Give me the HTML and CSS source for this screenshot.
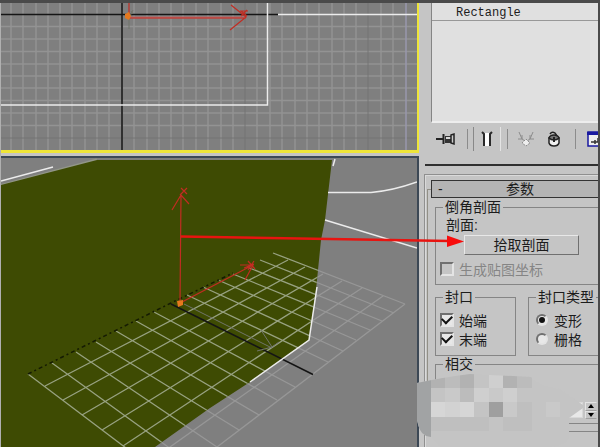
FILE: index.html
```html
<!DOCTYPE html>
<html lang="zh-CN">
<head>
<meta charset="utf-8">
<title>倒角剖面</title>
<link rel="stylesheet" href="styles.css">
</head>
<body>
<div class="app">
  <main class="viewports">
    <section class="viewport viewport-top">
      <svg viewBox="1 3 416 147" preserveAspectRatio="xMinYMin slice">
        <path class="grid-line" d="M11 3V150M23 3V150M36 3V150M48 3V150M60 3V150M72 3V150M85 3V150M97 3V150M109 3V150M134 3V150M147 3V150M159 3V150M171 3V150M183 3V150M196 3V150M208 3V150M221 3V150M233 3V150M257 3V150M270 3V150M282 3V150M295 3V150M307 3V150M319 3V150M332 3V150M344 3V150M356 3V150M381 3V150M393 3V150M1 26.500H417M1 39H417M1 51.500H417M1 64H417M1 76H417M1 88H417M1 100.500H417M1 113H417M1 125.500H417"/>
        <path class="grid-dark" d="M245 3V150M368 3V150M1 138H417"/>
        <path class="axis-purple" d="M406 3V150"/>
        <path class="axis-black thick" d="M122 3V150"/>
        <path class="axis-black" d="M1 14.500H278"/>
        <path class="spline" d="M278 14.500H417M267.500 3V105H1"/>
        <path class="gizmo-pale" d="M130 17.500H246"/>
        <path class="gizmo" d="M129 3V14M128 18H246M231 5L246 17L230 30M241 11L247 16M247 10L241 16M240 11H248"/>
        <path class="gizmo-ghost" d="M129 18V29M131 11l2 3m0-4l-3 6"/>
        <path class="origin" d="M125 14l4-2 2 4-2 4-4-2z"/>
      </svg>
    </section>
    <section class="viewport viewport-perspective">
      <svg viewBox="1 158 416 289" preserveAspectRatio="xMinYMin slice">
        <defs>
          <clipPath id="solid"><path d="M1 185L97 160H332L325 220L321 240L316 290L309 340L250 382L210 408L155 447H1Z"/></clipPath>
          <path id="floor" d="M28 374L171 482M52 363L193 465M76 352L217 447M96 342L239 430M116 331L259 415M136 321L277 400M154 312L295 387M187 295L328 362M203 287L343 351M218 280L356 340M233 274L370 330M247 267L382 321M260 260L394 313M273 253L405 304M45 386L288 260M63 400L305 267M82 415L323 274M102 430L342 281M123 446L362 288M146 464L383 296M171 482L405 304"/>
        </defs>
        <use class="floor-outside" href="#floor"/>
        <path class="edge-light" d="M1 185.500L97 160"/>
        <path class="solid" d="M1 185L97 160H332L325 220L321 240L316 290L309 340L250 382L210 408L155 447H1Z"/>
        <use class="floor-inside" href="#floor" clip-path="url(#solid)"/>
        <path class="back-edge" d="M28 374L171 303L233 273"/>
        <path class="axis-black" d="M171 304L313 374.500"/>
        <path class="gizmo-ghost" d="M184 304L272 348M261 330L272 347L257 351M272 347l7-5"/>
        <path class="spline" d="M1 181L53 167M335 159L333 166M328 192.500H371C390 191 403 187 417 182M325 220L417 248M317 287L309 340L250 382"/>
        <path class="gizmo" d="M181 195L180 303L253 265M172 210L181 195L189 204M181 188l6 6M187 188l-7 7M240 265L253 265L245 280M248 261l7 8M254 261l-6 9M244 268l10-4"/>
        <path class="origin" d="M177 301l6-1v5l-5 2z"/>
      </svg>
    </section>
  </main>

  <aside class="panel">
    <ul class="stack"><li class="stack-row">Rectangle</li></ul>

    <div class="toolbar">
      <button class="tool tool-pin" aria-label="锁定堆栈">
        <svg width="20" height="16" viewBox="0 0 20 16"><path d="M0 8H8" stroke="#222" stroke-width="2"/><path d="M7.500 3V13" stroke="#222" stroke-width="2"/><path d="M9 5H15V12H9Z" fill="#333"/><path d="M10 7H15" stroke="#d8d8d8" stroke-width="2"/><path d="M15 4L18 3V13L15 12Z" fill="#ccc" stroke="#222" stroke-width="1.500"/></svg>
      </button>
      <span class="divider"></span>
      <button class="tool tool-result" aria-label="显示最终结果">
        <svg width="12" height="18" viewBox="0 0 12 18"><path d="M3 3H9L8 5V16H4V5Z" fill="#fff"/><path d="M1 2L3 4V16M11 2L9 4V16" fill="none" stroke="#2a2a2a" stroke-width="2"/></svg>
      </button>
      <span class="divider"></span>
      <button class="tool tool-unique" aria-label="使唯一">
        <svg width="18" height="18" viewBox="0 0 18 18"><path d="M2 2L5 9L8 11M16 2L13 9L10 11M5 5V9H1M13 5V9H17" fill="none" stroke="#8c8c8c"/><path d="M9 9L13 13L9 16L5 13Z" fill="#eee" stroke="#8a8a8a" stroke-dasharray="2 1"/></svg>
      </button>
      <button class="tool tool-trash" aria-label="移除修改器">
        <svg width="14" height="18" viewBox="0 0 14 18"><path d="M2 8V13Q3 16 7 16Q11 16 12 13V8Z" fill="#f0f0f0" stroke="#222" stroke-width="1.500"/><path d="M2 8Q3 5 7 5Q11 5 12 8Q10 10 7 10Q4 10 2 8Z" fill="#777" stroke="#222" stroke-width="1.500"/><path d="M3 4Q5 1 8 3L10 6" fill="none" stroke="#222" stroke-width="1.500"/><path d="M7 7V12" stroke="#222" stroke-width="2"/></svg>
      </button>
      <span class="divider"></span>
      <button class="tool tool-config" aria-label="配置">
        <svg width="16" height="18" viewBox="0 0 16 18"><path d="M2 2H17V16H2Z" fill="#eee" stroke="#1919a0" stroke-width="1.500"/><path d="M1 2H16V5H1Z" fill="#1919a0"/><path d="M5 12H12V8M9 10V14" fill="none" stroke="#333" stroke-width="1.500"/></svg>
      </button>
    </div>

    <div class="rollouts">
      <fieldset class="rollout">
        <legend class="rollout-head"><button class="rollout-toggle"><span>-</span><span class="rollout-title">参数</span></button></legend>

        <fieldset class="group group-wide">
          <legend>倒角剖面</legend>
          <p class="caption">剖面:</p>
          <button class="pick">拾取剖面</button>
          <label class="option option-off"><input type="checkbox" disabled>生成贴图坐标</label>
        </fieldset>

        <div class="pair">
          <fieldset class="group group-caps">
            <legend>封口</legend>
            <label class="option"><input type="checkbox" checked>始端</label>
            <label class="option"><input type="checkbox" checked>末端</label>
          </fieldset>
          <fieldset class="group group-type">
            <legend>封口类型</legend>
            <label class="option"><input type="radio" name="cap" checked>变形</label>
            <label class="option"><input type="radio" name="cap">栅格</label>
          </fieldset>
        </div>

        <fieldset class="group group-wide group-cross">
          <legend>相交</legend>
          <div class="spin">
            <input class="spin-value" type="text" aria-label="分离">
            <div class="spin-buttons">
              <button aria-label="增加"><svg width="8" height="5" viewBox="0 0 8 5"><path d="M4 0L7 4H1Z"/></svg></button>
              <button aria-label="减少"><svg width="8" height="5" viewBox="0 0 8 5"><path d="M4 5L7 1H1Z"/></svg></button>
            </div>
          </div>
        </fieldset>
        <div class="rollout-end"></div>
      </fieldset>
    </div>
  </aside>

  <svg class="pointer" width="286" height="20" viewBox="180 230 286 20"><path d="M181 236.500L450 241" stroke="#e81410" stroke-width="2.500"/><path d="M447 235.500L464 241.500L447 247Z" fill="#f80c0c"/></svg>

  <svg class="mosaic" width="170" height="74" viewBox="416 373 170 74">
    <defs><clipPath id="smudge"><path d="M417 383Q445 377 470 374L531 377Q538 386 560 389L583 405V408L569 418V438Q566 445 550 447H440L431 437Q420 436 418 424L417 420Z"/></clipPath></defs>
    <g clip-path="url(#smudge)">
      <path fill="#c4c4c4" d="M416 373H586V447H416Z"/>
      <path fill="#a1a3a4" d="M417 373H431V438H417Z"/>
      <path fill="#b2b2b2" d="M431 373H445V388H431ZM460 373H474V388H460ZM503 373H517V388H503Z"/>
      <path fill="#bcbcbc" d="M445 373H460V388H445ZM517 373H532V388H517ZM460 388H474V402H460Z"/>
      <path fill="#cfcfcf" d="M489 373H503V388H489ZM474 388H489V402H474ZM503 388H517V402H503Z"/>
      <path fill="#c9c9c9" d="M445 388H460V402H445ZM489 388H503V402H489ZM503 402H517V417H503ZM546 402H560V417H546Z"/>
      <path fill="#d6d6d6" d="M431 402H445V417H431ZM460 402H474V417H460Z"/>
      <path fill="#d2d2d2" d="M445 402H460V417H445Z"/>
      <path fill="#9f9f9f" d="M489 402H503V417H489Z"/>
      <path fill="#bfbfbf" d="M431 417H489V431H431ZM503 417H532V431H503ZM517 402H532V417H517Z"/>
    </g>
  </svg>
</div>
</body>
</html>
```
FILE: styles.css
```css
* { box-sizing: border-box; }

body {
  margin: 0;
  background: #c5c5c5;
  color: #1c1c1c;
  font-family: "Liberation Sans", "Noto Sans CJK SC", sans-serif;
  font-size: 14px;
}

button, input { font: inherit; color: inherit; margin: 0; }

.app {
  position: relative;
  display: grid;
  grid-template-columns: minmax(0, 1fr) 179px;
  height: 100vh;
  overflow: hidden;
  border: solid #4a4a4a;
  border-width: 3px 2px 0 0;
  box-shadow: inset 1px 0 #b0b0b0;
}

.viewports {
  display: flex;
  flex-direction: column;
  gap: 3px;
  min-height: 0;
  padding-left: 1px;
}

.viewport { background: #7f7f7f; overflow: hidden; }
.viewport svg { display: block; width: 100%; height: 100%; }
.viewport-top {
  flex: 0 0 150px;
  border: solid #eee539;
  border-width: 0 2px 3px 0;
}
.viewport-perspective {
  flex: 1;
  min-height: 0;
  border: solid #3c4855;
  border-width: 2px 2px 0 0;
}

.viewport path, .viewport use { fill: none; }
.viewport .grid-line { stroke: #939393; stroke-width: 1.5; }
.viewport .grid-dark { stroke: #757575; }
.viewport .axis-purple { stroke: #9997ac; stroke-width: 1.5; }
.viewport .axis-black { stroke: #151515; stroke-width: 1.5; }
.viewport .thick { stroke: #303030; stroke-width: 2; }
.viewport .spline { stroke: #ececec; stroke-width: 1.5; }
.viewport .gizmo { stroke: #c22c22; stroke-width: 1.2; }
.viewport .gizmo-pale { stroke: #b66b6b; stroke-width: 2; }
.viewport .gizmo-ghost { stroke: #71756b; }
.viewport .origin { fill: #e5781e; }
.viewport .solid { fill: #3e4b03; }
.viewport .edge-light { stroke: #929688; stroke-width: 3; }
.viewport .floor-outside { stroke: #979797; stroke-width: 1.3; }
.viewport .floor-inside { stroke: #97a180; stroke-width: 1.3; }
.viewport .back-edge { stroke: #151b04; stroke-width: 1.5; stroke-dasharray: 4 3 2 3; }

.panel { min-width: 0; overflow: hidden; }

.stack {
  height: 120px;
  margin: 0 0 0 12px;
  padding: 0;
  list-style: none;
  background: #e0e0e0;
  border-left: 1px solid #858585;
  border-bottom: 2px solid #ededed;
}
.stack-row {
  height: 18px;
  padding-left: 24px;
  border-bottom: 1px solid #989898;
  font-family: "Liberation Mono", monospace;
  font-size: 12px;
  line-height: 20px;
}

.toolbar {
  display: flex;
  align-items: center;
  height: 43px;
  margin-left: 6px;
  padding: 0 0 10px 11px;
  border-bottom: 2px solid #303030;
}
.tool {
  display: grid;
  flex: none;
  place-items: center;
  height: 24px;
  padding: 0;
  border: 0;
  background: none;
}
.tool-pin { width: 20px; margin-right: 11px; }
.tool-result {
  width: 28px;
  margin: 0 6px 0 5px;
  border-left: 1px solid #888;
  border-right: 1px solid #e4e4e4;
}
.tool-unique { width: 18px; margin-left: 9px; }
.tool-trash { width: 14px; margin: 0 14px 0 12px; }
.tool-config { width: 16px; margin-left: 10px; }
.divider { flex: none; width: 1px; height: 20px; background: #8c8c8c; }

.rollouts {
  height: 100%;
  margin: 8px 0 0 5px;
  padding: 5px 0 0 2px;
  border: solid #8f8f8f;
  border-width: 1px 0 0 1px;
  box-shadow: inset 1px 1px #dadada;
}
.rollout {
  min-width: 0;
  margin: 0;
  padding: 0 0 0 3px;
  border: solid #918f86;
  border-width: 1px 0 0 1px;
}
.rollout-head { width: 100%; padding: 0; }
.rollout-toggle {
  display: grid;
  grid-template-columns: 8px 1fr;
  width: 100%;
  height: 18px;
  padding: 0 4px 0 6px;
  border: solid #333;
  border-width: 1px 0 1px 1px;
  background: #b4b4b4;
  line-height: 16px;
  text-align: left;
}
.rollout-title { text-align: center; }

.group {
  min-width: 0;
  margin: 0;
  padding: 0 4px 0;
  border: 1px solid #858585;
}
.group legend { padding: 0 2px; margin-left: 3px; line-height: 18px; }
.group-wide { margin: 0 -4px 0 4px; }
.caption { margin: 0 0 1px 6px; line-height: 18px; }
.pick {
  display: block;
  width: 115px;
  height: 20px;
  margin-left: 24px;
  padding: 0;
  border: 1px solid;
  border-color: #e8e8e8 #707070 #707070 #e8e8e8;
  background: #c5c5c5;
  line-height: 18px;
}
.option { display: flex; align-items: center; gap: 5px; height: 19px; white-space: nowrap; }
.option-off { height: 18px; margin: 5px 0 6px; color: #858585; }

.option input {
  appearance: none;
  flex: none;
  display: grid;
  place-items: center;
  width: 14px;
  height: 14px;
  border: 2px solid;
  border-color: #707070 #e4e4e4 #e4e4e4 #707070;
  background: #e8e8e8;
}
.option input:disabled { background: #c5c5c5; }
.option input[type="checkbox"]:checked::before {
  content: "";
  width: 8px;
  height: 5px;
  border: solid #111;
  border-width: 0 0 2px 2px;
  transform: translateY(-1px) rotate(-45deg);
}
.option input[type="radio"] { width: 12px; height: 12px; border-radius: 50%; }
.option input[type="radio"]:checked::before {
  content: "";
  width: 6px;
  height: 6px;
  border-radius: 50%;
  background: #111;
}

.pair { display: flex; gap: 12px; margin: 3px -4px 0 4px; }
.group-caps { width: 81px; padding: 4px 4px 7px; }
.group-type { flex: 1; padding: 4px 0 7px 7px; }
.group-type .option { gap: 6px; }
.group-type legend { margin-left: 0; }

.group-cross { height: 69px; margin-top: -1px; }
.spin { display: flex; justify-content: flex-end; margin-top: 29px; }
.spin-value {
  width: 50px;
  height: 16px;
  padding: 0;
  border: 1px solid #d8d8d8;
  background: #e8e8e8;
}
.spin-buttons { display: grid; width: 12px; height: 17px; margin-left: 2px; }
.spin-buttons button {
  display: grid;
  place-items: center;
  padding: 0;
  border: 1px solid;
  border-color: #e4e4e4 #c5c5c5 #a0a0a0 #e4e4e4;
  background: #c5c5c5;
}
.rollout-end { height: 8px; margin-left: -3px; border-bottom: 1px solid #858585; }

.pointer, .mosaic { position: absolute; pointer-events: none; }
.pointer { left: 180px; top: 227px; }
.mosaic { left: 416px; top: 370px; }
```
